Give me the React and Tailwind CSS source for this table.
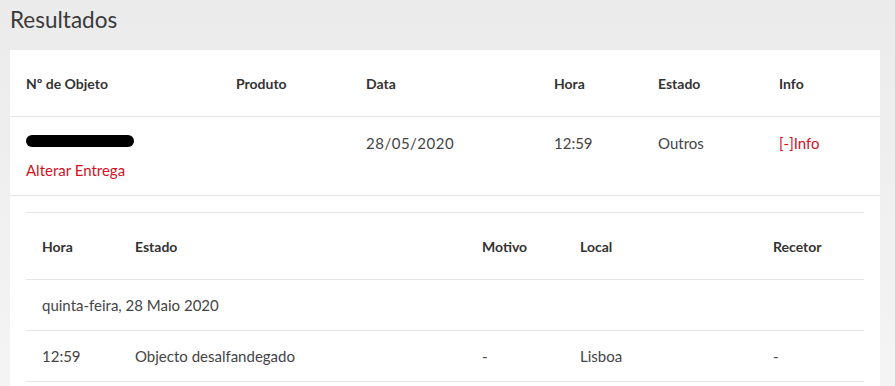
export default function App() {
  const font = { fontFamily: "Lato, 'Open Sans', sans-serif" };
  return (
    <div className="w-[895px] h-[386px] overflow-hidden bg-gradient-to-b from-[#ebebeb] to-[#f4f4f4] text-[#333]" style={font}>
      <h1 className="pl-[10px] pt-[5px] h-[50px] text-[22.5px] leading-[30px] font-normal text-[#3a3a3a]">Resultados</h1>
      <div className="ml-[10px] w-[870px] bg-white">
        <div className="grid grid-cols-[210px_130px_188px_104px_121px_1fr] pl-4 h-[67px] items-center border-b border-[#e6e6e6] text-[14px] font-bold text-[#333]">
          <div>Nº de Objeto</div>
          <div>Produto</div>
          <div>Data</div>
          <div>Hora</div>
          <div>Estado</div>
          <div>Info</div>
        </div>
        <div className="grid grid-cols-[210px_130px_188px_104px_121px_1fr] pl-4 h-[79px] border-b border-[#e6e6e6] text-[15px] text-[#444]">
          <div className="pt-[18px]">
            <div className="w-[108px] h-[12px] rounded-full bg-black"></div>
            <div className="mt-[12px] text-[15px] text-[#d3121f]">Alterar Entrega</div>
          </div>
          <div></div>
          <div className="pt-[15px] tracking-[0.5px]">28/05/2020</div>
          <div className="pt-[15px]">12:59</div>
          <div className="pt-[15px]">Outros</div>
          <div className="pt-[15px] text-[#d3121f]">[-]Info</div>
        </div>
        <div className="pt-[16px] px-4 pb-4">
          <div className="border-t border-[#e6e6e6]">
            <div className="grid grid-cols-[93px_347px_98px_193px_1fr] pl-4 h-[67px] items-center border-b border-[#e6e6e6] text-[14px] font-bold text-[#333]">
              <div>Hora</div>
              <div>Estado</div>
              <div>Motivo</div>
              <div>Local</div>
              <div>Recetor</div>
            </div>
            <div className="pl-4 h-[51px] flex items-center border-b border-[#e6e6e6] text-[15px] text-[#444]">
              quinta-feira, 28 Maio 2020
            </div>
            <div className="grid grid-cols-[93px_347px_98px_193px_1fr] pl-4 h-[51px] items-center border-b border-[#e6e6e6] text-[15px] text-[#444]">
              <div>12:59</div>
              <div>Objecto desalfandegado</div>
              <div>-</div>
              <div>Lisboa</div>
              <div>-</div>
            </div>
          </div>
        </div>
      </div>
    </div>
  );
}
